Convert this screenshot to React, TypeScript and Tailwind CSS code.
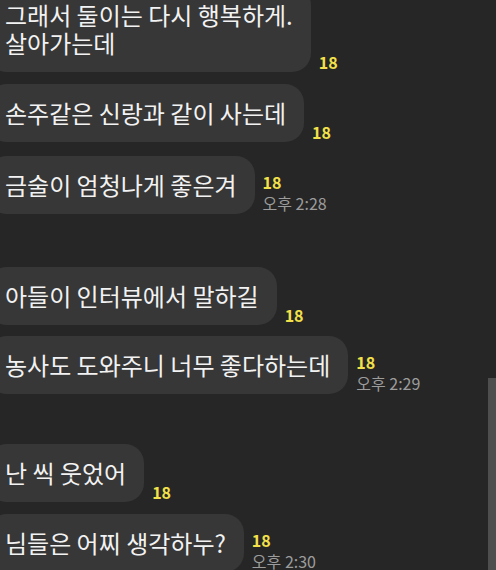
const font = { fontFamily: '"Noto Sans CJK KR", "Noto Sans", sans-serif' }

type Msg = { lines: string[]; time?: string; gapTop: string }

const messages: Msg[] = [
  { lines: ['그래서 둘이는 다시 행복하게.', '살아가는데'], gapTop: 'mt-0' },
  { lines: ['손주같은 신랑과 같이 사는데'], gapTop: 'mt-[12px]' },
  { lines: ['금술이 엄청나게 좋은겨'], time: '오후 2:28', gapTop: 'mt-[14px]' },
  { lines: ['아들이 인터뷰에서 말하길'], gapTop: 'mt-[53px]' },
  { lines: ['농사도 도와주니 너무 좋다하는데'], time: '오후 2:29', gapTop: 'mt-[11px]' },
  { lines: ['난 씩 웃었어'], gapTop: 'mt-[50px]' },
  { lines: ['님들은 어찌 생각하누?'], time: '오후 2:30', gapTop: 'mt-[12px]' },
]

function Bubble({ msg }: { msg: Msg }) {
  return (
    <div className={`flex items-end gap-[8px] ${msg.gapTop}`}>
      <div className="-ml-[12px] rounded-[19px] bg-[#373737] pl-[17px] pr-[18px] py-[15px] text-[24px] leading-[28px] text-[#f2f2f2]">
        {msg.lines.map((l) => (
          <div key={l} className="whitespace-nowrap">{l}</div>
        ))}
      </div>
      <div className="flex flex-col">
        <span className="text-[16px] font-bold leading-[20px] text-[#f3e14a]">18</span>
        {msg.time && (
          <span className="text-[16px] leading-[22px] text-[#9c9c9c] whitespace-nowrap">{msg.time}</span>
        )}
      </div>
    </div>
  )
}

export default function App() {
  return (
    <div className="relative h-[570px] w-[496px] overflow-hidden bg-[#262626]" style={font}>
      <div className="-mt-[14px] flex flex-col">
        {messages.map((m, i) => (
          <Bubble key={i} msg={m} />
        ))}
      </div>
      {/* scrollbar */}
      <div className="absolute right-0 top-[378px] h-[200px] w-[8px] bg-[#4e4e4e]" />
    </div>
  )
}
